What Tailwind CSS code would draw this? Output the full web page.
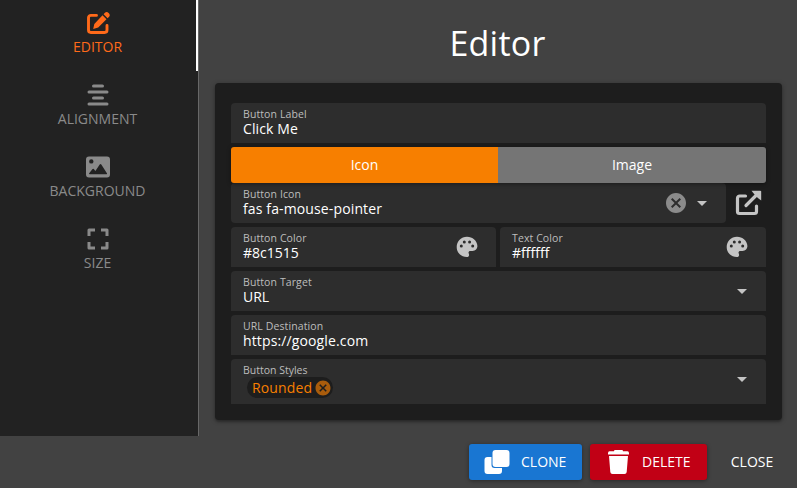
<!DOCTYPE html>
<html lang="en">
<head>
<meta charset="utf-8">
<title>Editor</title>
<script src="https://cdn.jsdelivr.net/npm/@tailwindcss/browser@4"></script>
</head>
<body class="w-[797px] h-[488px] overflow-hidden bg-[#424242] font-['Open_Sans',sans-serif] text-sm text-white">
<svg class="hidden">
  <symbol id="caret" viewBox="0 0 24 24"><path fill="currentColor" d="M7 10l5 5 5-5z"/></symbol>
  <symbol id="palette" viewBox="0 0 24 24"><path fill="currentColor" fill-rule="evenodd" d="M12 1.700C6.100 1.700 1.700 6.300 1.700 12S6.300 22 11.800 22c1.600 0 2.400-1.100 2.300-2.300-.1-.8-.6-1.300-.6-2.100 0-1 .8-1.700 1.800-1.700h2.200c3 0 4.900-2.200 4.900-4.800C22.400 5.700 17.500 1.700 12 1.700zM6.300 12.600a1.500 1.500 0 1 1 0-3 1.500 1.500 0 0 1 0 3zM9.300 8.600a1.500 1.500 0 1 1 0-3 1.500 1.500 0 0 1 0 3zM14.600 8.600a1.500 1.500 0 1 1 0-3 1.500 1.500 0 0 1 0 3zM17.700 12.600a1.500 1.500 0 1 1 0-3 1.500 1.500 0 0 1 0 3z"/></symbol>
  <symbol id="cancel" viewBox="0 0 24 24"><path fill="currentColor" d="M12 2C6.470 2 2 6.470 2 12s4.470 10 10 10 10-4.470 10-10S17.530 2 12 2zm5 13.590L15.590 17 12 13.410 8.410 17 7 15.590 10.590 12 7 8.410 8.410 7 12 10.590 15.590 7 17 8.410 13.410 12 17 15.590z"/></symbol>
</svg>

<div class="flex h-[436px]">
  <nav class="flex w-[198px] flex-col bg-[#222222] text-[#8a8a8a]">
    <div class="mb-px flex h-[71px] flex-col items-center border-r-2 border-white pt-[11px] pr-px text-[#ff6a1a]">
      <svg class="size-6" viewBox="0 0 24 24" fill="none"><path d="M10.500 4.400H4.900a2.400 2.400 0 0 0-2.400 2.400v12.300a2.400 2.400 0 0 0 2.400 2.400h13.700a2.400 2.400 0 0 0 2.400-2.400V14.500" stroke="currentColor" stroke-width="2.900" stroke-linecap="round"/><path fill="currentColor" d="M7.200 18l1.100-5L16.500 4.300l4 4L12.200 16.600zM17.600 3.200l1.300-1.500q1.900-1.400 3.700.3 2 1.900.5 3.700l-1.500 1.500z"/></svg>
      <span class="leading-[23px]">EDITOR</span>
    </div>
    <div class="flex h-[72px] flex-col items-center pt-[11px] pr-[3px]">
      <svg class="size-6" viewBox="0 0 24 24" stroke="currentColor" stroke-width="3" stroke-linecap="round"><path d="M7.500 3h9M3 9h18M7.500 15h9M3 21h18"/></svg>
      <span class="leading-[23px]">ALIGNMENT</span>
    </div>
    <div class="flex h-[72px] flex-col items-center pt-[11px] pr-[3px]">
      <svg class="size-6" viewBox="0 0 24 24"><path fill="currentColor" fill-rule="evenodd" d="M3 1.500h18q3 0 3 3v15q0 3-3 3H3q-3 0-3-3v-15q0-3 3-3zM5.300 4.200a2.200 2.200 0 1 0 0 4.400 2.200 2.200 0 0 0 0-4.400zM3 18.500q0 .8.8.8h16.700q.9 0 .4-1L15.300 9.600q-.8-1-1.600 0L9.400 16l-1.600-2q-.7-.7-1.500.2z"/></svg>
      <span class="leading-[23px]">BACKGROUND</span>
    </div>
    <div class="flex h-[72px] flex-col items-center pt-[11px] pr-[3px]">
      <svg class="size-6" viewBox="0 0 24 24" fill="none" stroke="currentColor" stroke-width="3" stroke-linejoin="round"><path d="M9 3H3v6M15 3h6v6M9 21H3v-6M15 21h6v-6"/></svg>
      <span class="leading-[23px]">SIZE</span>
    </div>
  </nav>
  <div class="w-px bg-[#686868]"></div>

  <main class="flex-1 pl-4 pr-[15px]">
    <h1 class="h-[83px] pr-[2px] pt-[19px] text-center text-[34px] leading-[48px] tracking-[0.25px]">Editor</h1>
    <section class="h-[337px] rounded bg-[#1d1d1d] px-4 pt-5 shadow-[0_1px_5px_rgba(0,0,0,0.3),0_2px_2px_rgba(0,0,0,0.2)]">
      <div class="h-10 rounded-t bg-[#2d2d2d] px-3 pt-1">
        <div class="text-[10.5px] leading-[15px] tracking-[0.1px] text-[#bdbdbd]">Button Label</div>
        <div class="leading-[14px] tracking-[0.13px]">Click Me</div>
      </div>
      <div class="relative mt-1 flex h-9 overflow-hidden rounded-[3px] text-center leading-9 shadow-[0_1px_4px_rgba(0,0,0,0.4)]">
        <div class="w-[267px] bg-[#f77f00]">Icon</div>
        <div class="flex-1 bg-[#757575]">Image</div>
      </div>
      <div class="flex h-10">
        <div class="flex w-[495px] items-center rounded bg-[#2d2d2d] pl-3">
          <div class="h-10 flex-1 pt-1">
            <div class="text-[10.5px] leading-[15px] tracking-[0.1px] text-[#bdbdbd]">Button Icon</div>
            <div class="leading-[14px] tracking-[0.13px]">fas fa-mouse-pointer</div>
          </div>
          <svg class="size-6 text-[#8b8b8b]"><use href="#cancel"/></svg>
          <svg class="ml-0.5 mr-3 size-6 text-[#c4c4c4]"><use href="#caret"/></svg>
        </div>
        <svg class="ml-[9px] mt-[7px] h-[26px] w-[28px] text-[#c4c4c4]" viewBox="0 0 28 26" fill="none"><path d="M10.500 6H4.700A2.200 2.200 0 0 0 2.500 8.200v13.300a2 2 0 0 0 2 2h15a2 2 0 0 0 2-2v-5.500M11 15.500L22.500 4" stroke="currentColor" stroke-width="3.200" stroke-linecap="round"/><path fill="currentColor" d="M16.500 .800h8.700q1 0 1 1v8.700l-3.300-2.600-3.800-3.800z"/></svg>
      </div>
      <div class="mt-1 flex gap-1">
        <div class="flex h-10 w-[265px] items-center rounded-t bg-[#2d2d2d] pl-3">
          <div class="h-10 flex-1 pt-1">
            <div class="text-[10.5px] leading-[15px] tracking-[0.1px] text-[#bdbdbd]">Button Color</div>
            <div class="leading-[14px]">#8c1515</div>
          </div>
          <svg class="mr-[17px] size-6 text-[#c4c4c4]"><use href="#palette"/></svg>
        </div>
        <div class="flex h-10 flex-1 items-center rounded-t bg-[#2d2d2d] pl-3">
          <div class="h-10 flex-1 pt-1">
            <div class="text-[10.5px] leading-[15px] tracking-[0.1px] text-[#bdbdbd]">Text Color</div>
            <div class="leading-[14px]">#ffffff</div>
          </div>
          <svg class="mr-[17px] size-6 text-[#c4c4c4]"><use href="#palette"/></svg>
        </div>
      </div>
      <div class="mt-1 flex h-10 items-center rounded-t bg-[#2d2d2d] pl-3">
        <div class="h-10 flex-1 pt-1">
          <div class="text-[10.5px] leading-[15px] tracking-[0.1px] text-[#bdbdbd]">Button Target</div>
          <div class="leading-[14px]">URL</div>
        </div>
        <svg class="mr-3 size-6 text-[#c4c4c4]"><use href="#caret"/></svg>
      </div>
      <div class="mt-1 h-10 rounded-t bg-[#2d2d2d] px-3 pt-1">
        <div class="text-[10.5px] leading-[15px] tracking-[0.1px] text-[#bdbdbd]">URL Destination</div>
        <div class="leading-[14px] tracking-[0.13px]">https://google.com</div>
      </div>
      <div class="mt-1 flex h-[45px] rounded-t bg-[#2d2d2d] pl-3">
        <div class="flex-1 pt-1">
          <div class="h-[14px] text-[10.5px] leading-[15px] text-[#bdbdbd]">Button Styles</div>
          <div class="ml-1 flex h-[21px] w-[86px] items-center justify-between rounded-full bg-[#1d1d1d] pl-[5px] pr-0 text-[#f77f00]">
            <span class="leading-[21px] tracking-[0.13px]">Rounded</span>
            <svg class="mr-px size-[18px] text-[#a95c0c]"><use href="#cancel"/></svg>
          </div>
        </div>
        <svg class="mr-3 mt-2 size-6 text-[#c4c4c4]"><use href="#caret"/></svg>
      </div>
    </section>
  </main>
</div>

<footer class="flex justify-end gap-2 pr-2 pt-2 leading-9">
  <button class="flex h-9 w-[113px] items-center rounded-[3px] bg-[#1976d2] pl-4 shadow-[0_1px_4px_rgba(0,0,0,0.4)]">
    <svg class="mr-3 size-6 overflow-visible" viewBox="0 0 24 24" fill="white"><path d="M6.500 7H2.500a3 3 0 0 0-3 3v11a3 3 0 0 0 3 3h11.500a3 3 0 0 0 3-3v-3H9.500a3 3 0 0 1-3-3z"/><rect x="7.500" y="0" width="17" height="17" rx="3"/></svg>
    CLONE
  </button>
  <button class="flex h-9 w-[117px] items-center rounded-[3px] bg-[#c10015] pl-4 shadow-[0_1px_4px_rgba(0,0,0,0.4)]">
    <svg class="mr-3 size-6 overflow-visible" viewBox="0 0 24 24" fill="white"><path d="M9 0h7q1 0 1 1.300h4.500q1.500 0 1.500 2V4.500H2V3.300q0-2 1.500-2H8Q8 0 9 0zM3 6h19l-1.300 16q-.2 2-2.200 2H6.500q-2 0-2.200-2z"/></svg>
    DELETE
  </button>
  <button class="w-[74px] text-center">CLOSE</button>
</footer>
</body>
</html>
